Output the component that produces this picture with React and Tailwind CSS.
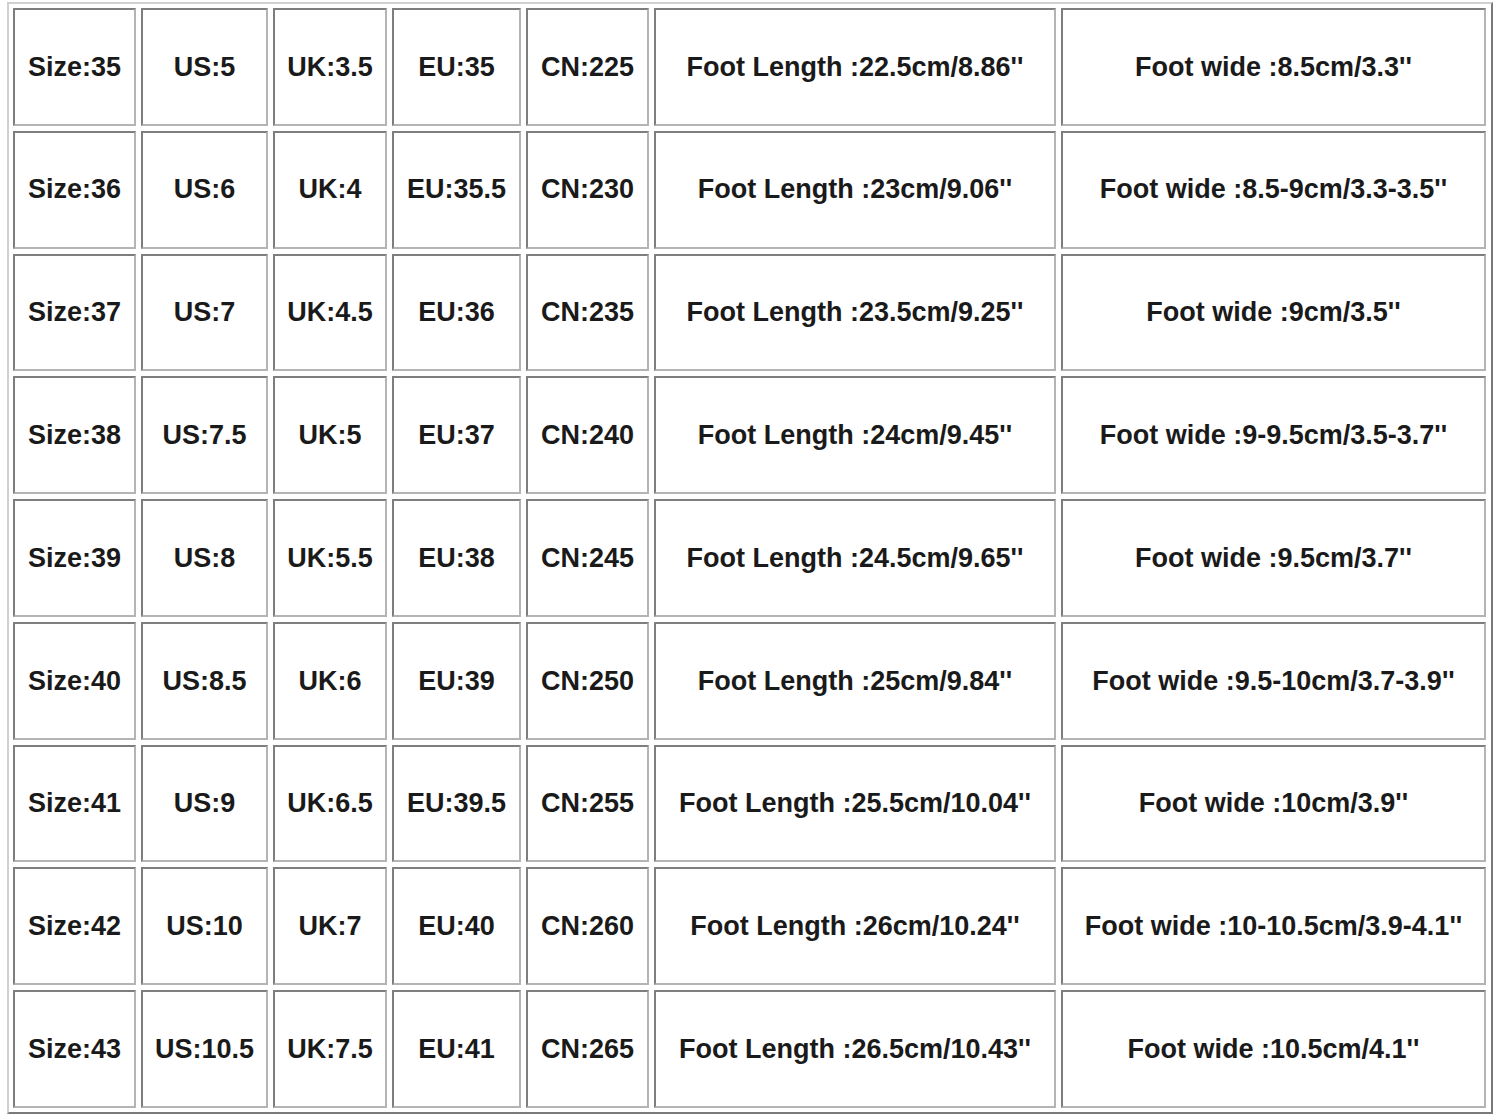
import React from "react";

const rows = [
  ["Size:35", "US:5", "UK:3.5", "EU:35", "CN:225", "Foot Length :22.5cm/8.86''", "Foot wide :8.5cm/3.3''"],
  ["Size:36", "US:6", "UK:4", "EU:35.5", "CN:230", "Foot Length :23cm/9.06''", "Foot wide :8.5-9cm/3.3-3.5''"],
  ["Size:37", "US:7", "UK:4.5", "EU:36", "CN:235", "Foot Length :23.5cm/9.25''", "Foot wide :9cm/3.5''"],
  ["Size:38", "US:7.5", "UK:5", "EU:37", "CN:240", "Foot Length :24cm/9.45''", "Foot wide :9-9.5cm/3.5-3.7''"],
  ["Size:39", "US:8", "UK:5.5", "EU:38", "CN:245", "Foot Length :24.5cm/9.65''", "Foot wide :9.5cm/3.7''"],
  ["Size:40", "US:8.5", "UK:6", "EU:39", "CN:250", "Foot Length :25cm/9.84''", "Foot wide :9.5-10cm/3.7-3.9''"],
  ["Size:41", "US:9", "UK:6.5", "EU:39.5", "CN:255", "Foot Length :25.5cm/10.04''", "Foot wide :10cm/3.9''"],
  ["Size:42", "US:10", "UK:7", "EU:40", "CN:260", "Foot Length :26cm/10.24''", "Foot wide :10-10.5cm/3.9-4.1''"],
  ["Size:43", "US:10.5", "UK:7.5", "EU:41", "CN:265", "Foot Length :26.5cm/10.43''", "Foot wide :10.5cm/4.1''"],
];

export default function App() {
  return (
    <div className="w-[1500px] h-[1119px] bg-white pl-[7px] pt-[2px]" style={{ fontFamily: '"Liberation Sans", Arial, sans-serif' }}>
      <div className="w-[1486px] border-2 border-t-[#d0d0d0] border-l-[#d0d0d0] border-r-[#7a7a7a] border-b-[#7a7a7a] p-[4px]">
        <div className="grid grid-cols-[123px_127px_114px_129px_123px_402px_425px] grid-rows-[repeat(9,minmax(0,1fr))] gap-[5px] h-[1100px]">
          {rows.flatMap((r, i) =>
            r.map((c, j) => (
              <div
                key={i + "-" + j}
                className="flex items-center justify-center border-2 border-t-[#7e7e7e] border-l-[#7e7e7e] border-r-[#b4b4b4] border-b-[#b4b4b4] text-[27px] font-bold text-[#1a1a1a] whitespace-nowrap"
              >
                {c}
              </div>
            ))
          )}
        </div>
      </div>
    </div>
  );
}
